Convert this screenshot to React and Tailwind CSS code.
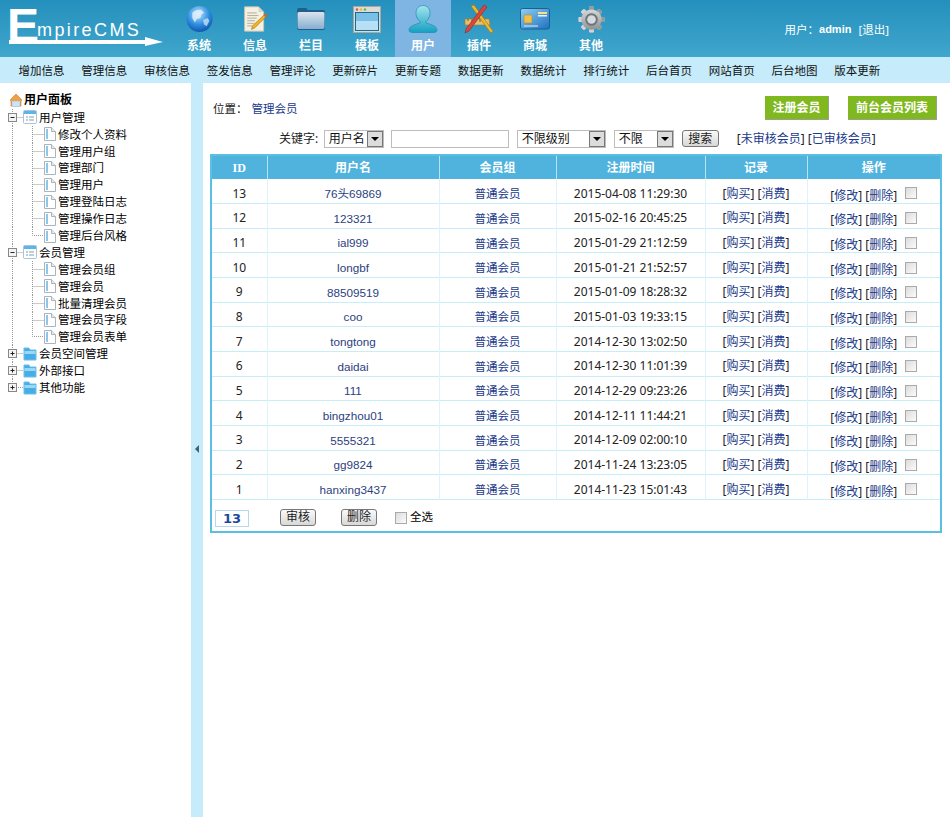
import React from "react";

const cn = '"Noto Sans", "Noto Sans CJK SC", sans-serif';
const lat = '"Liberation Sans", "Noto Sans CJK SC", sans-serif';

// HEADER ICONS
const Globe = () => (
  <svg width="27" height="28" viewBox="0 0 30 30">
    <defs>
      <radialGradient id="gl" cx="45%" cy="30%" r="75%">
        <stop offset="0" stopColor="#bfe6fb" />
        <stop offset="0.55" stopColor="#2f8fe0" />
        <stop offset="1" stopColor="#0b4fa8" />
      </radialGradient>
    </defs>
    <circle cx="15" cy="15" r="14.5" fill="url(#gl)" />
    <path d="M7 8c3-3 7-4 10-3l3 3-3 2-1 4-4 1-2 4-3-5z" fill="#e6f3fb" opacity=".8" />
    <path d="M19 16l5-2 2 3-3 6-3-2z" fill="#d7ecf9" opacity=".7" />
  </svg>
);

const Doc = () => (
  <svg width="26" height="28" viewBox="0 0 30 30">
    <path d="M3 1h16l6 6v22H3z" fill="#f4f0e2" stroke="#c9c5b4" />
    <path d="M19 1v6h6z" fill="#d8d4c4" />
    <path d="M6 8h11M6 11h13M6 14h11M6 17h9M6 20h8M6 23h6" stroke="#a9a698" />
    <path d="M27 9l2 2-14 14-4 2 1-4z" fill="#f0b429" stroke="#a86f10" strokeWidth=".7" />
    <path d="M27 9l2 2-2 2-2-2z" fill="#d9584a" />
  </svg>
);

const Folder = () => (
  <svg width="30" height="24" viewBox="0 0 30 24">
    <defs>
      <linearGradient id="fo" x1="0" y1="0" x2="0" y2="1">
        <stop offset="0" stopColor="#dbe4ec" />
        <stop offset="1" stopColor="#86aed0" />
      </linearGradient>
    </defs>
    <path d="M1 3q0-2 2-2h7l2 2h15q2 0 2 2v16q0 2-2 2H3q-2 0-2-2z" fill="#1f5f8a" />
    <path d="M1.500 6q0-1 2-1h23q2 0 2 1v14.500q0 1.500-2 1.500h-23q-2 0-2-1.500z" fill="url(#fo)" />
  </svg>
);

const WindowIcon = () => (
  <svg width="28" height="27" viewBox="0 0 28 27">
    <rect x=".5" y=".5" width="27" height="26" fill="#dcdcd6" stroke="#a8a8a0" />
    <circle cx="4" cy="3.5" r="1.2" fill="#d9534a" />
    <circle cx="8" cy="3.5" r="1.2" fill="#e8b93c" />
    <circle cx="12" cy="3.5" r="1.2" fill="#6cb33f" />
    <rect x="2" y="6" width="24" height="19" fill="#1d6a94" />
    <rect x="3" y="7" width="22" height="8" fill="#79bfe6" />
    <rect x="3" y="15" width="22" height="9" fill="#b7dff5" />
  </svg>
);

const UserIcon = () => (
  <svg width="30" height="28" viewBox="0 0 30 28">
    <defs>
      <linearGradient id="us" x1="0" y1="0" x2="0" y2="1">
        <stop offset="0" stopColor="#a5e4ee" />
        <stop offset="1" stopColor="#14a0c2" />
      </linearGradient>
    </defs>
    <path d="M15 .5c4 0 7 3 7 7.500 0 3.500-1.500 6.500-4 8.500v1.500c5 1.500 11 3 11 7 0 2-2 2.500-4 2.500H5c-2 0-4-.5-4-2.500 0-4 6-5.500 11-7v-1.500c-2.500-2-4-5-4-8.500C8 3.500 11 .5 15 .5z" fill="url(#us)" stroke="#1587a8" strokeWidth=".6" />
  </svg>
);

const Tools = () => (
  <svg width="30" height="30" viewBox="0 0 30 30">
    <path d="M1 15h24l1 6H1z" fill="#e3c070" stroke="#a67c22" strokeWidth=".6" />
    <path d="M4 15v2M8 15v3M12 15v2M16 15v3M20 15v2" stroke="#8a5a10" />
    <path d="M7 2l3-1 19 26-1 2-2-1z" fill="#efb92e" stroke="#a66d12" strokeWidth=".6" />
    <path d="M20 1l3 2L5 27l-4 2 1-4z" fill="#d9473c" stroke="#93261e" strokeWidth=".6" />
  </svg>
);

const Card = () => (
  <svg width="30" height="22" viewBox="0 0 30 22">
    <defs>
      <linearGradient id="ca" x1="0" y1="0" x2="1" y2="1">
        <stop offset="0" stopColor="#8fd0f2" />
        <stop offset="1" stopColor="#1f6fc0" />
      </linearGradient>
    </defs>
    <rect x=".5" y=".5" width="29" height="20.500" rx="2" fill="url(#ca)" stroke="#1c5f96" />
    <rect x="4" y="7" width="8" height="8" rx="1" fill="#f0c14d" stroke="#b98a20" strokeWidth=".6" />
    <rect x="18" y="4" width="9" height="2" fill="#fbe08a" />
    <rect x="18" y="7" width="9" height="1.500" fill="#e8f5fc" />
    <path d="M4 18h14" stroke="#dcefff" />
  </svg>
);

const Gear = () => (
  <svg width="27" height="27" viewBox="0 0 28 28">
    <defs>
      <linearGradient id="ge" x1="0" y1="0" x2="0" y2="1">
        <stop offset="0" stopColor="#d5d8da" />
        <stop offset="1" stopColor="#8f9498" />
      </linearGradient>
    </defs>
    <g fill="url(#ge)">
      {[0, 45, 90, 135, 180, 225, 270, 315].map((a) => (
        <rect key={a} x="11.500" y="0.500" width="5" height="27" rx="1" transform={`rotate(${a} 14 14)`} />
      ))}
      <circle cx="14" cy="14" r="10.500" />
    </g>
    <circle cx="14" cy="14" r="6.500" fill="#6f7478" />
    <circle cx="14" cy="14" r="4.500" fill="#d6dbe0" />
  </svg>
);

const navItems = [
  { name: "系统", icon: <Globe /> },
  { name: "信息", icon: <Doc /> },
  { name: "栏目", icon: <Folder /> },
  { name: "模板", icon: <WindowIcon /> },
  { name: "用户", icon: <UserIcon />, active: true },
  { name: "插件", icon: <Tools /> },
  { name: "商城", icon: <Card /> },
  { name: "其他", icon: <Gear /> },
];

const subNav = ["增加信息", "管理信息", "审核信息", "签发信息", "管理评论", "更新碎片", "更新专题", "数据更新", "数据统计", "排行统计", "后台首页", "网站首页", "后台地图", "版本更新"];

const tree = [
  { name: "用户管理", open: true, children: ["修改个人资料", "管理用户组", "管理部门", "管理用户", "管理登陆日志", "管理操作日志", "管理后台风格"] },
  { name: "会员管理", open: true, children: ["管理会员组", "管理会员", "批量清理会员", "管理会员字段", "管理会员表单"] },
  { name: "会员空间管理" },
  { name: "外部接口" },
  { name: "其他功能" },
];

const users = [
  [13, "76头69869", "2015-04-08 11:29:30"],
  [12, "123321", "2015-02-16 20:45:25"],
  [11, "ial999", "2015-01-29 21:12:59"],
  [10, "longbf", "2015-01-21 21:52:57"],
  [9, "88509519", "2015-01-09 18:28:32"],
  [8, "coo", "2015-01-03 19:33:15"],
  [7, "tongtong", "2014-12-30 13:02:50"],
  [6, "daidai", "2014-12-30 11:01:39"],
  [5, "111", "2014-12-29 09:23:26"],
  [4, "bingzhou01", "2014-12-11 11:44:21"],
  [3, "5555321", "2014-12-09 02:00:10"],
  [2, "gg9824", "2014-11-24 13:23:05"],
  [1, "hanxing3437", "2014-11-23 15:01:43"],
];

// TREE PARTS
const GroupConnector = ({ open, last }) => (
  <svg width="23" height="17" className="shrink-0">
    <path d={last ? "M12.500 0V8.500H23" : "M12.500 0V17M12.500 8.500H23"} stroke="#999" strokeDasharray="1 1" fill="none" />
    <rect x="8.500" y="4.500" width="8" height="8" fill="#f4f4f4" stroke="#888" />
    <path d={open ? "M10.500 8.500h4" : "M10.500 8.500h4M12.500 6.500v4"} stroke="#222" />
  </svg>
);

const ChildConnector = ({ last }) => (
  <svg width="44" height="17" className="shrink-0">
    <path d="M12.500 0V17" stroke="#999" strokeDasharray="1 1" fill="none" />
    <path d={last ? "M32.500 0V8.500H44" : "M32.500 0V17M32.500 8.500H44"} stroke="#999" strokeDasharray="1 1" fill="none" />
  </svg>
);

const OpenFolder = () => (
  <svg width="14" height="14" viewBox="0 0 14 14" className="shrink-0">
    <rect x=".5" y=".5" width="13" height="13" rx="1" fill="#fff" stroke="#a9c3d8" />
    <rect x="1" y="1" width="12" height="3" fill="#5db4e6" />
    <path d="M3 7h2M3 10h2M6 7h5M6 10h5" stroke="#7d9fb8" />
  </svg>
);

const ClosedFolder = () => (
  <svg width="14" height="14" viewBox="0 0 14 14" className="shrink-0">
    <path d="M1 1h5l1 2h6v10H1z" fill="#46ade6" stroke="#6fbfe8" />
    <rect x="1.500" y="4" width="11" height="3" fill="#9ad8f6" />
  </svg>
);

const PageIcon = () => (
  <svg width="12" height="14" viewBox="0 0 12 14" className="shrink-0">
    <path d="M.5.5h7l4 4v9H.5z" fill="#fff" stroke="#a9b4bd" />
    <path d="M3 2v10" stroke="#8cc6ec" strokeWidth="2" />
    <path d="M7.500.5v4h4" fill="#e6edf2" stroke="#a9b4bd" />
  </svg>
);

const HomeIcon = () => (
  <svg width="14" height="14" viewBox="0 0 14 14" className="shrink-0">
    <path d="M7 1L1 7l1 1v5h10V8l1-1z" fill="#f0a040" stroke="#c9772a" strokeWidth=".6" />
    <rect x="3" y="8" width="8" height="5.500" fill="#cfe3f5" stroke="#9db8cf" strokeWidth=".5" />
  </svg>
);

// FORM PARTS
const FakeSelect = ({ label, className }) => (
  <div className={`flex h-[18px] items-center justify-between border border-[#bdbdbd] bg-white pl-1 text-[12px] text-[#111] ${className}`}>
    <span>{label}</span>
    <span className="flex h-[16px] w-[16px] items-center justify-center border border-[#777] bg-[#dcdcdc]">
      <span className="h-0 w-0 border-x-[4px] border-t-[4px] border-x-transparent border-t-black" />
    </span>
  </div>
);

const GrayButton = ({ children, className }) => (
  <button className={`h-[17px] rounded-[3px] border border-[#777] bg-gradient-to-b from-[#fafafa] to-[#d8d8d8] text-[12px] leading-none text-[#222] ${className}`}>
    {children}
  </button>
);

const Check = () => (
  <input type="checkbox" className="h-[12px] w-[12px] appearance-none border border-[#aaa] bg-gradient-to-br from-[#dcdcdc] to-[#fbfbfb] align-middle" />
);

const App = () => {
  return (
    <div className="flex h-[817px] w-[950px] flex-col overflow-hidden bg-white text-[11.5px] text-[#222]" style={{ fontFamily: cn }}>

      {/* TOP BAR */}
      <div className="flex h-[57px] shrink-0 bg-gradient-to-b from-[#2490bd] to-[#3fa6cc]">
        <div className="relative flex w-[171px] shrink-0 items-start pl-[7px] text-white" style={{ fontFamily: '"Liberation Sans", sans-serif' }}>
          <span className="mt-[2px] text-[48px] font-bold leading-[48px]">E</span>
          <span className="ml-[-2px] mt-[21px] text-[18px] leading-[18px] tracking-[2.4px]">mpireCMS</span>
          <svg width="156" height="10" className="absolute left-[9px] top-[37px]">
            <path d="M0 3h136V0l18 5-18 4V7H0z" fill="#fff" />
          </svg>
        </div>

        <div className="flex">
          {navItems.map((item) => (
            <div
              key={item.name}
              className={`flex w-[56px] flex-col items-center justify-between pb-[3px] pt-[4px] ${item.active ? "bg-[#7fb5e2]" : ""}`}
            >
              <div className="flex h-[30px] items-center justify-center">{item.icon}</div>
              <span className="text-[12px] font-bold leading-[16px] text-white">{item.name}</span>
            </div>
          ))}
        </div>

        <div className="ml-auto mr-[61px] flex items-start pt-[21px] text-white">
          <span>用户：</span>
          <span className="text-[11px] font-bold" style={{ fontFamily: lat }}>admin</span>
          <span className="ml-[7px]">[退出]</span>
        </div>
      </div>

      {/* SUB MENU */}
      <div className="flex h-[26px] shrink-0 items-center gap-[16.75px] bg-[#c6ecfb] pl-[18.5px] pt-[1px] text-[#111]">
        {subNav.map((item) => (
          <span key={item} className="whitespace-nowrap">{item}</span>
        ))}
      </div>

      <div className="flex min-h-0 flex-1">

        {/* LEFT TREE */}
        <div className="w-[191px] shrink-0 pt-[9px]">
          <div className="flex h-[16.9px] items-center pl-[9px] text-[12px] font-bold text-black">
            <HomeIcon />
            <span className="ml-[1px]">用户面板</span>
          </div>
          {tree.map((group, i) => (
            <div key={group.name}>
              <div className="flex h-[16.9px] items-center text-black">
                <GroupConnector open={group.open} last={i === tree.length - 1} />
                {group.open ? <OpenFolder /> : <ClosedFolder />}
                <span className="ml-[2px]">{group.name}</span>
              </div>
              {group.children?.map((child, j) => (
                <div key={child} className="flex h-[16.9px] items-center text-black">
                  <ChildConnector last={j === group.children.length - 1} />
                  <PageIcon />
                  <span className="ml-[2px]">{child}</span>
                </div>
              ))}
            </div>
          ))}
        </div>

        {/* SPLITTER */}
        <div className="flex w-[12px] shrink-0 items-center justify-center bg-[#c6ecfb] pb-[2px]">
          <span className="h-0 w-0 border-y-[4px] border-r-[4px] border-y-transparent border-r-[#44606e]" />
        </div>

        {/* MAIN */}
        <div className="flex-1 pl-[7px] pr-[8px]">
          <div className="flex h-[47px] items-start pr-[5px] pt-[13px]">
            <div className="pl-[3px] pt-[4px]">
              位置：&nbsp;<span className="ml-[1px] text-[#1a3a8a]">管理会员</span>
            </div>
            <button className="ml-auto h-[24px] w-[64px] border-b border-r border-[#9aa08a] bg-[#7fb91f] text-[12px] font-bold text-white">注册会员</button>
            <button className="ml-[19px] h-[24px] w-[89px] border-b border-r border-[#9aa08a] bg-[#7fb91f] text-[12px] font-bold text-white">前台会员列表</button>
          </div>

          <div className="flex h-[24px] items-start pl-[69px]">
            <span className="text-[12px] leading-[18px]">关键字:</span>
            <FakeSelect label="用户名" className="ml-[5.5px] w-[60px]" />
            <div className="ml-[7px] h-[18px] w-[118px] border border-[#bdbdbd] bg-white" />
            <FakeSelect label="不限级别" className="ml-[8px] w-[89px]" />
            <FakeSelect label="不限" className="ml-[8px] w-[60px]" />
            <GrayButton className="ml-[8px] w-[37px]">搜索</GrayButton>
            <span className="ml-[18px] text-[12px] leading-[18px] text-[#222]">
              [<span className="text-[#1a3a8a]">未审核会员</span>] [<span className="text-[#1a3a8a]">已审核会员</span>]
            </span>
          </div>

          {/* MEMBER TABLE */}
          <div className="w-[732px] border-2 border-[#5bbfe3] bg-white">
            <table className="w-full table-fixed border-collapse">
              <thead>
                <tr className="h-[23px] bg-[#4fb3de] text-[12px] font-bold text-white">
                  <th className="w-[55px] border-r border-[#b5e6f5]" style={{ fontFamily: '"Liberation Serif", serif' }}>ID</th>
                  <th className="w-[172px] border-r border-[#b5e6f5]">用户名</th>
                  <th className="w-[117px] border-r border-[#b5e6f5]">会员组</th>
                  <th className="w-[149px] border-r border-[#b5e6f5]">注册时间</th>
                  <th className="w-[102px] border-r border-[#b5e6f5]">记录</th>
                  <th>操作</th>
                </tr>
              </thead>
              <tbody>
                {users.map(([id, name, time]) => (
                  <tr key={id} className="h-[24.67px] border-b border-[#c5eef9] text-center">
                    <td className="border-r border-[#dcf3fa] pt-[5px] text-[12px] text-[#222]">{id}</td>
                    <td className="border-r border-[#dcf3fa] pt-[5px] text-[11.7px] text-[#2b3f7e]" style={{ fontFamily: lat }}>{name}</td>
                    <td className="border-r border-[#dcf3fa] pt-[5px] text-[#1a3a8a]">普通会员</td>
                    <td className="border-r border-[#dcf3fa] pt-[5px] text-[12px] text-[#222]">{time}</td>
                    <td className="border-r border-[#dcf3fa] pt-[5px] text-[12px] text-[#222]">
                      [<span className="text-[#1a3a8a]">购买</span>] [<span className="text-[#1a3a8a]">消费</span>]
                    </td>
                    <td className="pt-[3px] text-[12px] text-[#222]">
                      <span className="relative top-[3px]">
                        [<span className="text-[#1a3a8a]">修改</span>] [<span className="text-[#1a3a8a]">删除</span>]
                      </span>
                      <span className="ml-[8px]"><Check /></span>
                    </td>
                  </tr>
                ))}
              </tbody>
            </table>

            <div className="box-border flex h-[31px] items-center pl-[3px] pt-[3px]">
              <div className="mt-[3px] flex h-[17px] w-[34px] items-center justify-center border border-[#b5d8ea] text-[13px] font-bold text-[#1a4aa0]" style={{ fontFamily: '"DejaVu Sans", sans-serif' }}>
                13
              </div>
              <GrayButton className="ml-[31px] w-[36px]">审核</GrayButton>
              <GrayButton className="ml-[25px] w-[36px]">删除</GrayButton>
              <span className="ml-[18px]"><Check /></span>
              <span className="ml-[3px] text-black">全选</span>
            </div>
          </div>
        </div>
      </div>
    </div>
  );
};

export default App;
